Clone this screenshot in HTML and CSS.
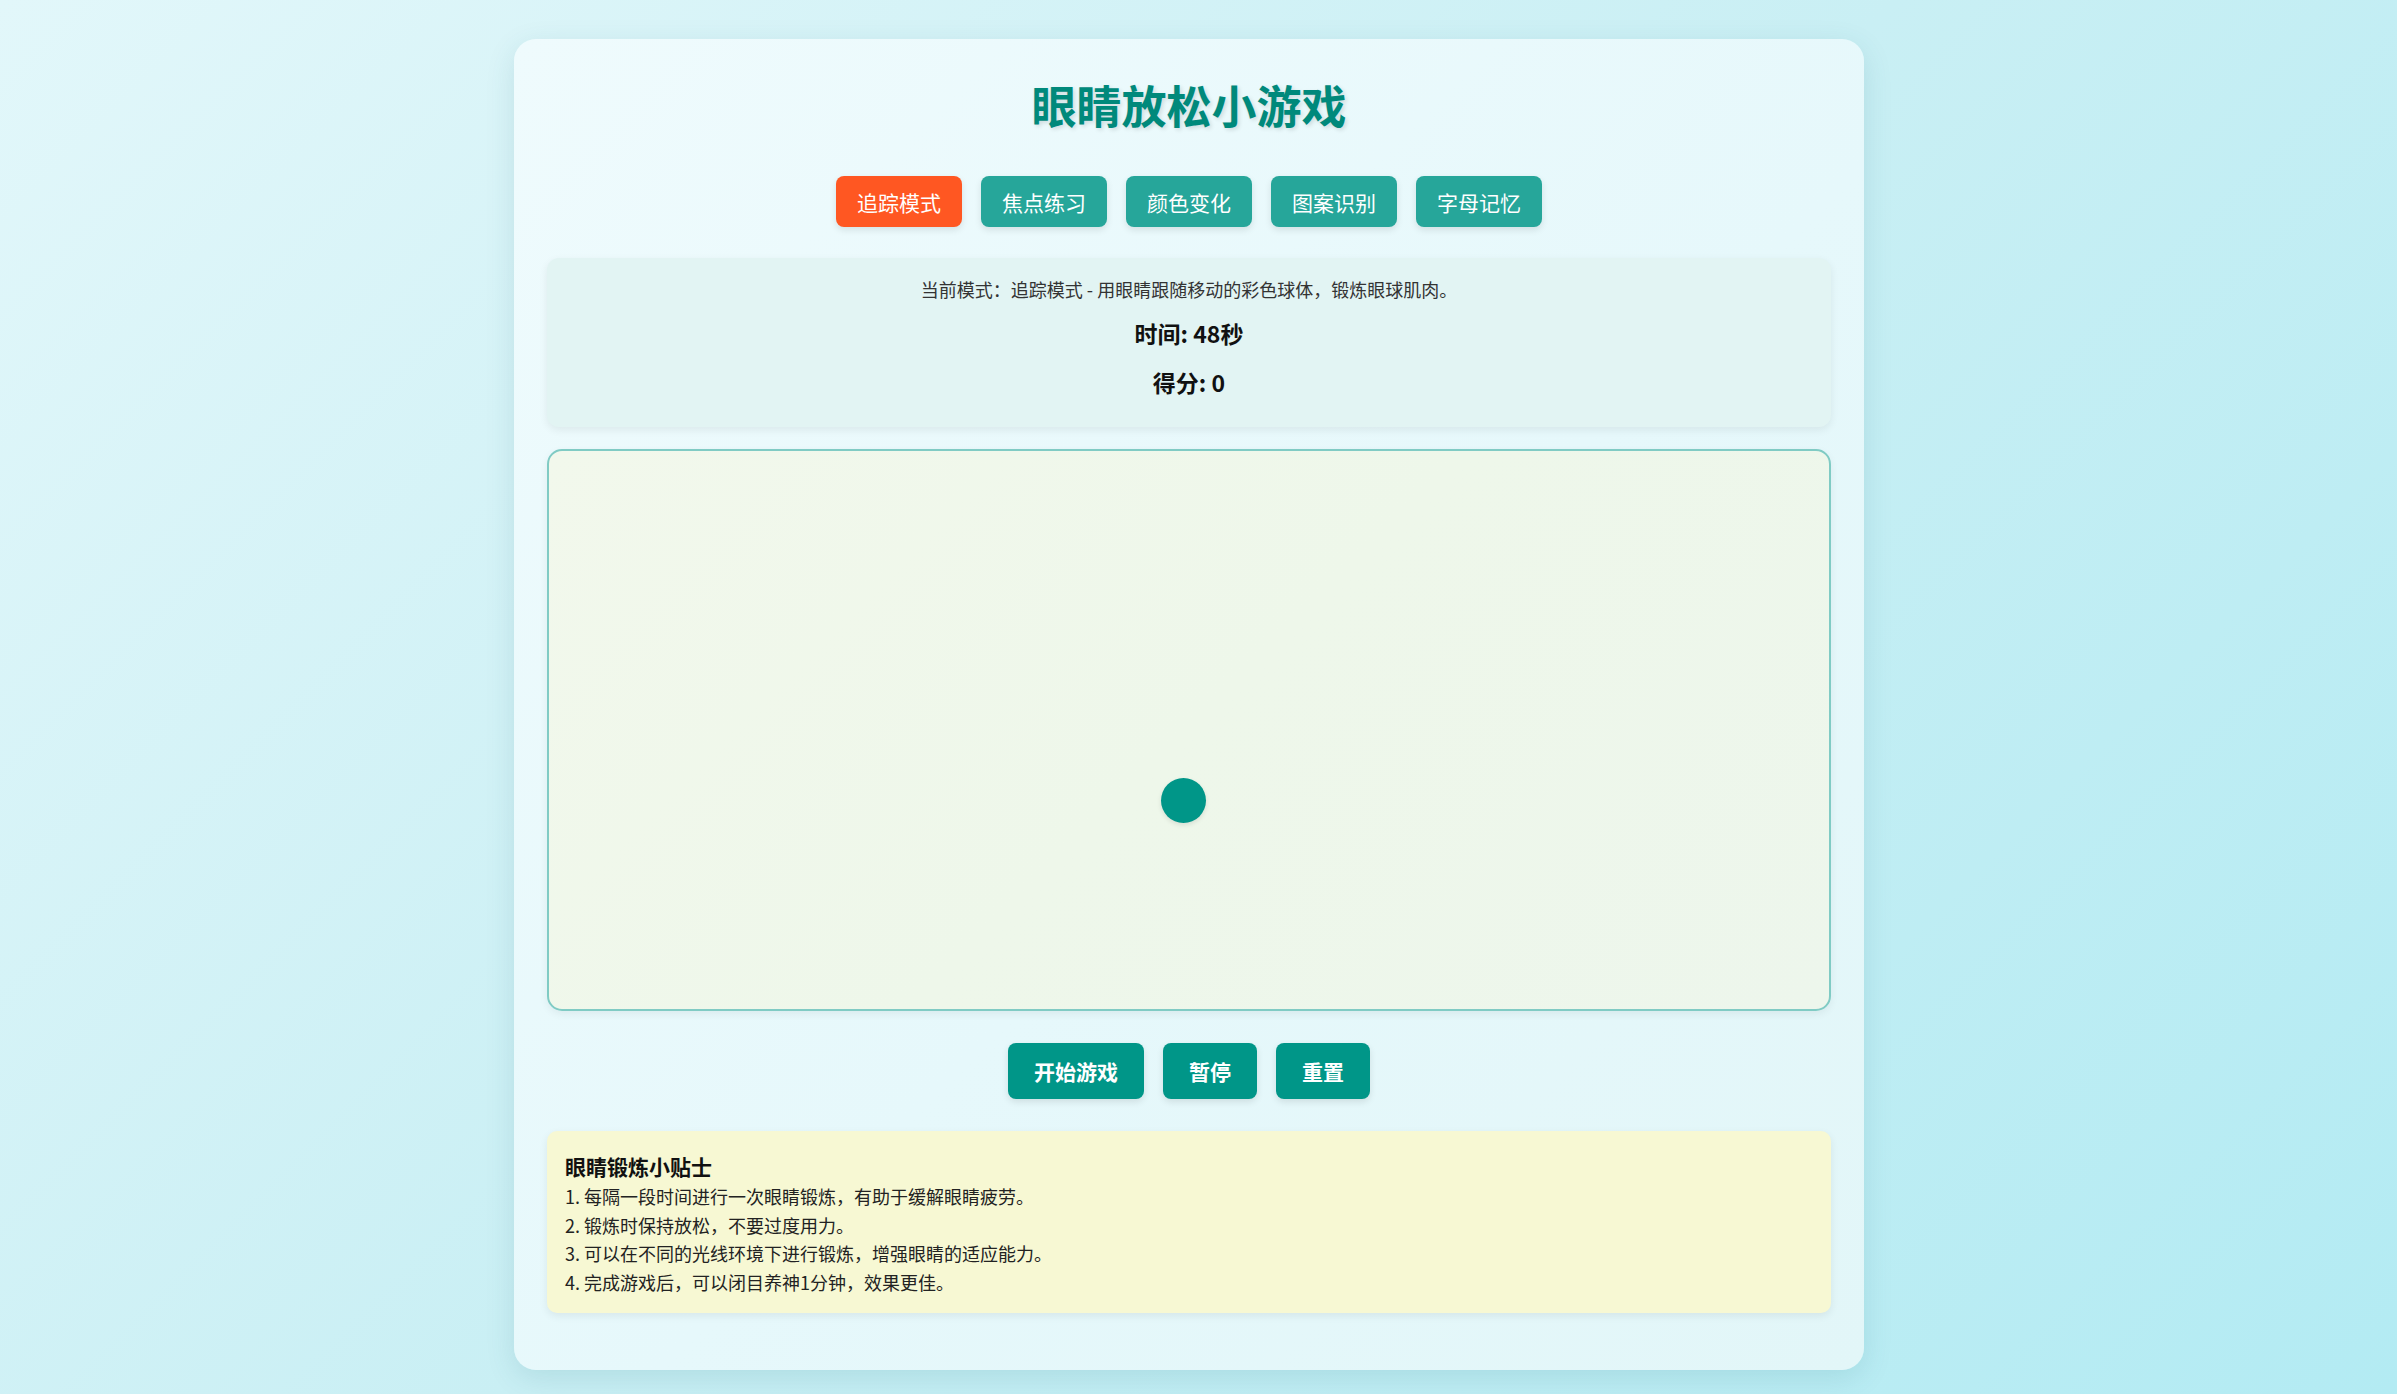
FILE: index.html
```html
<!DOCTYPE html>
<html lang="zh-CN">
<head>
<meta charset="utf-8">
<title>眼睛放松小游戏</title>
<link rel="stylesheet" href="styles.css">
</head>
<body>
<div class="page">
  <main class="card">
    <h1 class="title">眼睛放松小游戏</h1>
    <nav class="modes">
      <button class="mode-btn active">追踪模式</button>
      <button class="mode-btn">焦点练习</button>
      <button class="mode-btn">颜色变化</button>
      <button class="mode-btn">图案识别</button>
      <button class="mode-btn">字母记忆</button>
    </nav>
    <section class="info">
      <p class="info-desc">当前模式：追踪模式 - 用眼睛跟随移动的彩色球体，锻炼眼球肌肉。</p>
      <p class="info-stat">时间: 48秒</p>
      <p class="info-stat score">得分: 0</p>
    </section>
    <section class="game-area">
      <div class="ball"></div>
    </section>
    <div class="controls">
      <button class="ctrl-btn">开始游戏</button>
      <button class="ctrl-btn">暂停</button>
      <button class="ctrl-btn">重置</button>
    </div>
    <section class="tips">
      <h3 class="tips-title">眼睛锻炼小贴士</h3>
      <p class="tip">1. 每隔一段时间进行一次眼睛锻炼，有助于缓解眼睛疲劳。</p>
      <p class="tip">2. 锻炼时保持放松，不要过度用力。</p>
      <p class="tip">3. 可以在不同的光线环境下进行锻炼，增强眼睛的适应能力。</p>
      <p class="tip">4. 完成游戏后，可以闭目养神1分钟，效果更佳。</p>
    </section>
  </main>
</div>
</body>
</html>
```

FILE: styles.css
```css
* { box-sizing: border-box; }

html, body {
  margin: 0;
  padding: 0;
}

body {
  min-height: 100vh;
  background: linear-gradient(135deg, #e2f7fa 0%, #c9eff4 50%, #b3ebf3 100%);
  font-family: "Noto Sans CJK SC", "Noto Sans", sans-serif;
  color: #333;
}

.page {
  padding: 39px 19px 24px 0;
}

.card {
  width: 1350px;
  margin: 0 auto;
  padding: 33px 33px 57px;
  border-radius: 22px;
  background: linear-gradient(135deg, #effbfd 0%, #e6f8fb 55%, #e2f6f8 100%);
  box-shadow: 0 8px 30px rgba(0, 90, 110, 0.12);
  display: flex;
  flex-direction: column;
}

.title {
  margin: 0;
  height: 66px;
  line-height: 66px;
  text-align: center;
  font-size: 45px;
  font-weight: 700;
  color: #00897b;
  text-shadow: 2px 2px 4px rgba(0, 0, 0, 0.12);
}

.modes {
  margin-top: 38px;
  display: flex;
  justify-content: center;
  gap: 19px;
}

.mode-btn {
  height: 51px;
  padding: 0 21px;
  border: none;
  border-radius: 8px;
  background: #26a69a;
  color: #fff;
  font-family: inherit;
  font-size: 21px;
  font-weight: 400;
  box-shadow: 0 3px 7px rgba(0, 0, 0, 0.1);
}

.mode-btn.active {
  background: #ff5722;
}

.info {
  margin-top: 31px;
  padding: 15px 20px 28px;
  border-radius: 12px;
  background: #e2f4f3;
  box-shadow: 0 3px 8px rgba(0, 0, 0, 0.07);
  text-align: center;
}

.info p { margin: 0; }

.info-desc {
  font-size: 18px;
  line-height: 32px;
  color: #333;
}

.info-stat {
  margin-top: 11px !important;
  font-size: 23px;
  line-height: 34px;
  font-weight: 700;
  color: #111;
}

.info-stat.score {
  margin-top: 15px !important;
}

.game-area {
  position: relative;
  margin-top: 22px;
  height: 562px;
  border: 2px solid #80cbc4;
  border-radius: 15px;
  background: linear-gradient(135deg, #f2f8ec 0%, #eef7ea 50%, #edf6ec 100%);
  box-shadow: 0 3px 8px rgba(0, 0, 0, 0.06);
}

.ball {
  position: absolute;
  left: 612px;
  top: 327px;
  width: 45px;
  height: 45px;
  border-radius: 50%;
  background: #009688;
  box-shadow: 0 2px 5px rgba(0, 0, 0, 0.1);
}

.controls {
  margin-top: 32px;
  display: flex;
  justify-content: center;
  gap: 19px;
}

.ctrl-btn {
  height: 56px;
  padding: 0 26px;
  border: none;
  border-radius: 8px;
  background: #009688;
  color: #fff;
  font-family: inherit;
  font-size: 21px;
  font-weight: 700;
  box-shadow: 0 3px 7px rgba(0, 0, 0, 0.1);
}

.tips {
  margin-top: 32px;
  padding: 20px 18px 16px;
  border-radius: 10px;
  background: #f7f8d3;
  box-shadow: 0 3px 8px rgba(0, 0, 0, 0.07);
}

.tips-title {
  margin: 0 0 1px;
  font-size: 21px;
  line-height: 30px;
  font-weight: 700;
  color: #111;
}

.tip {
  margin: 0;
  font-size: 18px;
  line-height: 28.7px;
  color: #222;
}
```
